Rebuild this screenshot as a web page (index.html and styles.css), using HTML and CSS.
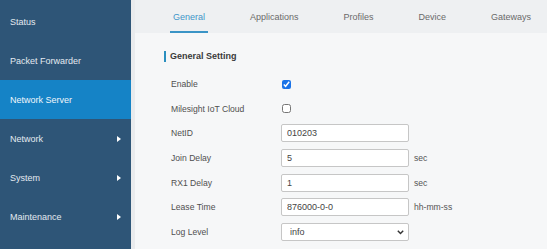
FILE: index.html
```html
<!DOCTYPE html>
<html>
<head>
<meta charset="utf-8">
<link rel="stylesheet" href="styles.css">
</head>
<body>
<div class="app">
  <nav class="sidebar">
    <div class="nav-item">Status</div>
    <div class="nav-item">Packet Forwarder</div>
    <div class="nav-item active">Network Server</div>
    <div class="nav-item">Network <span class="arrow"></span></div>
    <div class="nav-item">System <span class="arrow"></span></div>
    <div class="nav-item">Maintenance <span class="arrow"></span></div>
  </nav>
  <main class="main">
    <div class="tabs">
      <div class="tab active">General</div>
      <div class="tab">Applications</div>
      <div class="tab">Profiles</div>
      <div class="tab">Device</div>
      <div class="tab">Gateways</div>
    </div>
    <section class="content">
      <h2 class="heading">General Setting</h2>
      <div class="form">
        <div class="row"><label class="label">Enable</label><input class="check" type="checkbox" checked></div>
        <div class="row"><label class="label">Milesight IoT Cloud</label><input class="check" type="checkbox"></div>
        <div class="row"><label class="label">NetID</label><input class="field" type="text" value="010203"></div>
        <div class="row"><label class="label">Join Delay</label><input class="field" type="text" value="5"><span class="unit">sec</span></div>
        <div class="row"><label class="label">RX1 Delay</label><input class="field" type="text" value="1"><span class="unit">sec</span></div>
        <div class="row"><label class="label">Lease Time</label><input class="field" type="text" value="876000-0-0"><span class="unit">hh-mm-ss</span></div>
        <div class="row"><label class="label">Log Level</label>
          <span class="select-wrap">
            <select class="field select"><option>info</option></select>
            <svg class="chev" width="7" height="5" viewBox="0 0 7 5"><path d="M0.8 0.8 L3.5 3.6 L6.2 0.8" fill="none" stroke="#333" stroke-width="1.4"/></svg>
          </span>
        </div>
      </div>
    </section>
  </main>
</div>
</body>
</html>
```
FILE: styles.css
```css
* { box-sizing: border-box; }
html, body { margin: 0; padding: 0; background: #ffffff; }
body { font-family: "Liberation Sans", Arial, sans-serif; }

.app {
  display: flex;
  width: 547px;
  height: 249px;
  background: #e9ebed;
}

.sidebar {
  width: 131px;
  flex: none;
  background: #2e5577;
  padding-top: 2px;
}

.nav-item {
  height: 39px;
  display: flex;
  align-items: center;
  justify-content: space-between;
  padding: 0 10px 0 10px;
  color: #e3eaf0;
  font-size: 9px;
}

.nav-item.active { background: #1583c6; color: #f0f6fb; }

.arrow {
  width: 0;
  height: 0;
  border-top: 3.5px solid transparent;
  border-bottom: 3.5px solid transparent;
  border-left: 4px solid #ffffff;
}

.main {
  flex: 1;
  margin-left: 4px;
  background: #f6f7f8;
  display: flex;
  flex-direction: column;
}

.tabs {
  height: 33px;
  background: #eef0f2;
  display: flex;
  gap: 39px;
  padding-left: 35px;
}

.tab {
  display: flex;
  align-items: center;
  padding: 2px 3px 0;
  border-bottom: 2px solid transparent;
  font-size: 9px;
  color: #6a6a6a;
}

.tab.active { color: #3f95c9; border-bottom-color: #3a94c6; }

.content { padding: 18px 0 0 29px; }

.heading {
  margin: 0;
  border-left: 2px solid #2a8fbf;
  padding-left: 4px;
  font-size: 9px;
  line-height: 11px;
  font-weight: bold;
  color: #3a3a3a;
}

.form { margin-top: 10px; padding-left: 7px; }

.row {
  height: 24.6px;
  display: flex;
  align-items: center;
}

.label {
  width: 110px;
  flex: none;
  font-size: 8.6px;
  color: #505050;
}

.check {
  margin: 0 0 0 1px;
  width: 9px;
  height: 9px;
  accent-color: #1a73e8;
}

.field {
  width: 128px;
  height: 18px;
  margin: 0;
  border: 1px solid #c6c6c6;
  border-radius: 2px;
  background: #ffffff;
  padding: 0 5px;
  font-family: "Liberation Sans", Arial, sans-serif;
  font-size: 9px;
  color: #444444;
  outline: none;
}

.unit {
  margin-left: 5px;
  font-size: 8.6px;
  color: #555555;
}

.select-wrap { position: relative; display: inline-flex; }
.select { appearance: none; -webkit-appearance: none; padding-left: 8px; }
.chev { position: absolute; right: 5px; top: 7px; pointer-events: none; }
```
